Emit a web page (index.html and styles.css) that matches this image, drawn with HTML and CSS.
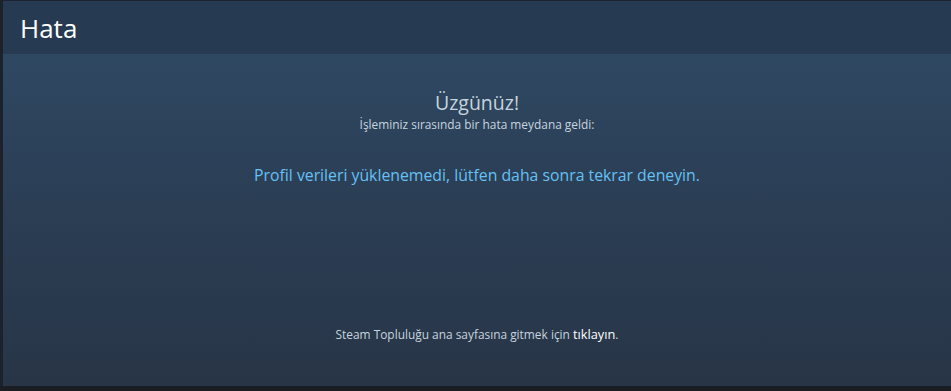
FILE: index.html
```html
<!DOCTYPE html>
<html lang="tr">
<head>
<meta charset="utf-8">
<title>Hata</title>
<link rel="stylesheet" href="styles.css">
</head>
<body>
<div class="frame">
  <div class="page">
    <header class="title-bar"><h1 class="title">Hata</h1></header>
    <main class="content">
      <h2 class="sorry">Üzgünüz!</h2>
      <p class="sub">İşleminiz sırasında bir hata meydana geldi:</p>
      <p class="error">Profil verileri yüklenemedi, lütfen daha sonra tekrar deneyin.</p>
      <p class="back">Steam Topluluğu ana sayfasına gitmek için <a class="link" href="#">tıklayın</a>.</p>
    </main>
  </div>
</div>
</body>
</html>
```
FILE: styles.css
```css
html, body {
  margin: 0;
  padding: 0;
  height: 100%;
  background: #1a1d23;
}
body {
  font-family: "Open Sans", "Liberation Sans", Arial, sans-serif;
}
.frame {
  height: 386px;
  display: flex;
  border-top: 1px solid #1c2230;
  box-sizing: border-box;
  padding-left: 3px;
  background: #1c222c;
}
.page {
  flex: 1;
  display: flex;
  flex-direction: column;
}
.title-bar {
  height: 53px;
  background: #263a52;
  display: flex;
  align-items: center;
  padding-left: 17px;
  box-sizing: border-box;
}
.title {
  margin: 0;
  font-size: 26px;
  font-weight: normal;
  color: #ffffff;
  line-height: 1;
}
.content {
  flex: 1;
  background: linear-gradient(to bottom, #2f4862 0%, #2b3f56 40%, #283547 100%);
  display: flex;
  flex-direction: column;
  align-items: center;
  text-align: center;
}
.sorry {
  margin: 37px 0 0;
  font-size: 19.5px;
  font-weight: normal;
  color: #c6d4df;
  line-height: 24px;
}
.sub {
  margin: 2px 0 0;
  font-size: 11.9px;
  color: #c6d4df;
  line-height: 15px;
}
.error {
  margin: 33px 0 0;
  font-size: 15.8px;
  color: #66c0f4;
  line-height: 20px;
}
.back {
  margin: 141px 0 0;
  font-size: 11.9px;
  color: #c6d4df;
  line-height: 16px;
}
.link {
  color: #ffffff;
  font-size: 12.8px;
  text-decoration: none;
}
```
